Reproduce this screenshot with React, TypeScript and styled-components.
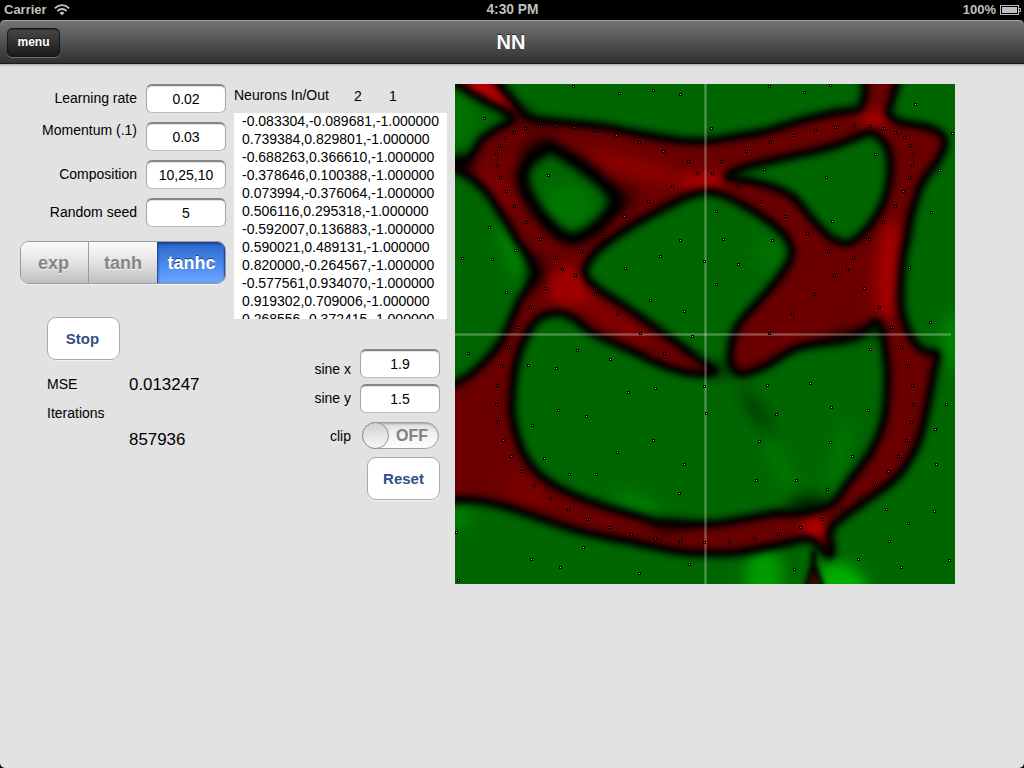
import React from 'react';
import styled, { createGlobalStyle, css } from 'styled-components';

const Global = createGlobalStyle`
  * { box-sizing: border-box; }
  body {
    margin: 0;
    background: #000;
    font-family: "Liberation Sans", Helvetica, Arial, sans-serif;
    font-size: 14px;
    color: #000;
    overflow: hidden;
  }
`;

const Screen = styled.div`
  width: 1024px;
  height: 768px;
  display: flex;
  flex-direction: column;
  overflow: hidden;
`;

const StatusBar = styled.header`
  height: 20px;
  display: grid;
  grid-template-columns: 1fr auto 1fr;
  align-items: center;
  padding: 0 3px 0 4px;
  background: #000;
  color: #bfbfbf;
  font-size: 13px;
  font-weight: bold;
  line-height: 20px;
`;

const Clock = styled.span`
  font-size: 13.8px;
`;

const StatusGroup = styled.div<{ $end?: boolean }>`
  display: flex;
  align-items: center;
  gap: ${(p) => (p.$end ? 4 : 7)}px;
  justify-content: ${(p) => (p.$end ? 'flex-end' : 'flex-start')};
`;

const NavBar = styled.nav`
  height: 44px;
  display: grid;
  grid-template-columns: 60px 1fr 69px;
  align-items: center;
  padding: 0 0 0 7px;
  border-radius: 5px 5px 0 0;
  background: linear-gradient(#757575, #535353 48%, #2f2f2f);
  box-shadow: inset 0 1px #a0a0a0, inset 0 -1px #1c1c1c;
`;

const MenuButton = styled.button`
  width: 53px;
  height: 29px;
  padding: 0;
  border: 1px solid #171717;
  border-radius: 5px;
  background: linear-gradient(#494949, #303030 50%, #1a1a1a);
  box-shadow: 0 1px rgba(255, 255, 255, 0.28), inset 0 1px 1px rgba(0, 0, 0, 0.4);
  color: #fff;
  font: bold 12px "Liberation Sans", Helvetica, sans-serif;
  text-shadow: 0 -1px rgba(0, 0, 0, 0.6);
`;

const Title = styled.h1`
  margin: 0;
  text-align: center;
  color: #fff;
  font-size: 20px;
  line-height: 44px;
  text-shadow: 0 -1px rgba(0, 0, 0, 0.6);
`;

const Content = styled.main`
  flex: 1;
  display: flex;
  align-items: flex-start;
  padding: 20px 0 0 20px;
  background: #e2e2e2;
  border-radius: 0 0 5px 5px;
  box-shadow: inset 0 4px 3px -3px rgba(0, 0, 0, 0.3);
`;

const Settings = styled.section`
  width: 206px;
  margin-right: 8px;
`;

const Field = styled.label<{ $gap: number }>`
  display: flex;
  justify-content: flex-end;
  align-items: flex-start;
  gap: 9px;
  margin-bottom: ${(p) => p.$gap}px;
`;

const FieldText = styled.span<{ $top: number }>`
  padding-top: ${(p) => p.$top}px;
  line-height: 16px;
`;

const Input = styled.input`
  width: 80px;
  height: 29px;
  padding: 0;
  border: 1px solid #a6a6a6;
  border-top: 2px solid #858585;
  border-bottom-color: #bdbdbd;
  border-radius: 6px;
  background: #fff;
  box-shadow: inset 0 1px 1px rgba(0, 0, 0, 0.12);
  text-align: center;
  font: 14px "Liberation Sans", Helvetica, sans-serif;
  color: #000;
  outline: none;
`;

const Segments = styled.div`
  display: grid;
  grid-template-columns: 67px 69px 1fr;
  height: 43px;
  margin-top: 14px;
  border: 1px solid #9c9c9c;
  border-radius: 9px;
  overflow: hidden;
  box-shadow: 0 1px rgba(255, 255, 255, 0.6);
`;

const Segment = styled.button<{ $active?: boolean }>`
  padding: 1px 0 0;
  border: 0;
  font: bold 18px "Liberation Sans", Helvetica, sans-serif;
  color: #858585;
  background: linear-gradient(#fbfbfb, #e3e3e3 50%, #bfbfbf);
  text-shadow: 0 1px rgba(255, 255, 255, 0.8);
  &:first-child { padding-right: 2px; }
  & + & { border-left: 1px solid #9c9c9c; }
  ${(p) =>
    p.$active &&
    css`
      color: #fff;
      background: linear-gradient(#2c67cb, #4586ea 50%, #6ba8ff);
      box-shadow: inset 0 2px 3px rgba(0, 20, 80, 0.5), inset -1px 0 1px rgba(0, 40, 130, 0.5);
      text-shadow: 0 -1px rgba(0, 0, 0, 0.5);
      && { border-left: 1px solid #2450a4; }
    `}
`;

const RoundButton = styled.button<{ $shift?: number }>`
  width: 73px;
  height: 43px;
  padding: 0 ${(p) => p.$shift ?? 0}px 0 0;
  border: 1px solid #a9a9a9;
  border-radius: 9px;
  background: #fff;
  box-shadow: 0 1px rgba(255, 255, 255, 0.6);
  color: #324f85;
  font: bold 15px "Liberation Sans", Helvetica, sans-serif;
`;

const Stats = styled.div`
  padding: 33px 0 0 27px;
`;

const StatGrid = styled.dl`
  display: grid;
  grid-template-columns: 82px 1fr;
  grid-template-rows: 29px 29px 24px;
  align-items: center;
  margin: 9px 0 0;
`;

const StatName = styled.dt``;

const StatValue = styled.dd<{ $low?: boolean }>`
  margin: 0;
  padding-top: 2px;
  font-size: 16.9px;
  ${(p) => p.$low && 'grid-column: 2; grid-row: 3;'}
`;

const Data = styled.section`
  width: 213px;
  margin-right: 8px;
`;

const DataHead = styled.div`
  display: grid;
  grid-template-columns: 120px 35px auto;
  height: 29px;
  padding-top: 3px;
  line-height: 16px;
`;

const HeadNumber = styled.span`
  padding-top: 1px;
`;

const DataList = styled.div`
  height: 206px;
  overflow: hidden;
  padding-left: 8px;
  background: #fff;
`;

const DataRows = styled.div`
  margin-top: -1px;
  line-height: 18px;
  white-space: nowrap;
`;

const Controls = styled.div`
  display: flex;
  flex-direction: column;
  align-items: flex-end;
  padding: 30px 7px 0 0;
`;

const SwitchRow = styled.div`
  display: flex;
  align-items: center;
  gap: 11px;
  margin: 3px 1px 8px 0;
`;

const Switch = styled.div`
  display: flex;
  align-items: center;
  width: 77px;
  height: 27px;
  border: 1px solid #a0a0a0;
  border-radius: 14px;
  background: linear-gradient(#dcdcdc, #f2f2f2 45%, #fdfdfd);
  box-shadow: inset 0 1px 2px rgba(0, 0, 0, 0.25);
`;

const Knob = styled.span`
  width: 27px;
  height: 27px;
  flex: none;
  margin-left: -1px;
  border: 1px solid #8f8f8f;
  border-radius: 50%;
  background: linear-gradient(#d0d0d0, #f8f8f8);
`;

const SwitchText = styled.span`
  padding-left: 7px;
  color: #808080;
  font-weight: bold;
  font-size: 16px;
`;

const Plot = styled.svg`
  display: block;
  flex: none;
  width: 500px;
  height: 500px;
`;

const samples = [
  '-0.083304,-0.089681,-1.000000',
  '0.739384,0.829801,-1.000000',
  '-0.688263,0.366610,-1.000000',
  '-0.378646,0.100388,-1.000000',
  '0.073994,-0.376064,-1.000000',
  '0.506116,0.295318,-1.000000',
  '-0.592007,0.136883,-1.000000',
  '0.590021,0.489131,-1.000000',
  '0.820000,-0.264567,-1.000000',
  '-0.577561,0.934070,-1.000000',
  '0.919302,0.709006,-1.000000',
  '0.268556,-0.372415,-1.000000',
];

type Pt = [number, number];

const pairs = (text: string): Pt[] =>
  text.trim().split(/\s+/).map((p) => p.split(',').map(Number) as Pt);

// Closed Catmull-Rom spline through the points.
const spline = (text: string) => {
  const p = pairs(text);
  const n = p.length;
  const f = (v: number) => v.toFixed(1);
  let d = `M${p[0][0]},${p[0][1]}`;
  for (let i = 0; i < n; i++) {
    const a = p[(i - 1 + n) % n];
    const b = p[i];
    const c = p[(i + 1) % n];
    const e = p[(i + 2) % n];
    d += `C${f(b[0] + (c[0] - a[0]) / 6)},${f(b[1] + (c[1] - a[1]) / 6)} ${f(c[0] - (e[0] - b[0]) / 6)},${f(c[1] - (e[1] - b[1]) / 6)} ${c[0]},${c[1]}`;
  }
  return `${d}Z`;
};

const regions = [
  // top
  '36,-30 38,-12 45,0 53,10 62,21 69,29 78,35 105,38 145,42 182,49 222,56 250,57 278,53 312,47 345,37 378,29 402,25 408,18 410,0 410,-12 410,-30',
  // upper left corner
  '-30,-30 -18,-14 3,1 28,16 52,29 57,36 45,43 28,54 20,66 12,76 0,77 -14,74 -30,72',
  // left side
  '-30,72 -14,77 0,84 15,93 32,109 48,133 62,156 74,174 80,188 75,200 65,216 55,239 45,259 28,279 12,293 0,299 -14,305 -30,312',
  // right ear
  '273,93 288,84 328,74 372,64 395,56 415,49 428,57 435,76 433,103 425,126 408,149 392,159 375,153 358,136 338,113 318,103 295,97',
  // centre and lower face
  '250,108 265,110 288,121 315,138 333,156 336,173 322,196 302,219 282,243 275,269 277,283 288,290 312,281 342,264 372,258 398,253 415,243 422,238 428,253 432,283 432,309 428,339 415,369 395,396 377,419 348,428 322,429 295,434 265,439 245,440 208,439 182,432 145,421 112,408 85,391 67,366 58,336 57,316 60,286 68,259 82,236 102,229 118,234 138,249 175,266 212,283 242,290 260,287 248,278 208,249 168,221 138,201 130,188 134,177 145,164 175,143 215,121 234,112',
  // right side and bottom
  '450,-30 445,-12 442,0 437,16 434,29 445,38 472,43 487,51 490,61 482,78 467,99 457,129 452,156 448,176 446,216 450,239 462,261 472,268 482,270 478,293 473,320 467,346 460,366 442,393 412,416 388,433 377,443 375,453 377,468 373,471 362,460 352,455 332,459 308,464 278,469 245,469 220,467 182,459 128,448 82,433 45,421 18,416 0,416 -14,416 -30,418 -30,530 250,530 530,530 530,-30',
].map(spline);

const eye = spline('92,64 105,68 128,83 148,99 162,116 155,129 138,146 118,155 102,148 82,126 68,99 73,78');

interface Glow { x: number; y: number; rx: number; ry: number; r?: number; c: string; o?: number }

const redGlows: Glow[] = [
  { x: 115, y: 203, rx: 24, ry: 20, c: '#ac0000' },
  { x: 182, y: 84, rx: 50, ry: 9, r: 16, c: '#980000' },
  { x: 248, y: 99, rx: 24, ry: 8, c: '#c80000' },
  { x: 420, y: 35, rx: 16, ry: 10, c: '#b40000' },
  { x: 434, y: 187, rx: 13, ry: 52, r: 4, c: '#b00000' },
  { x: 30, y: 8, rx: 34, ry: 12, r: 38, c: '#d80000' },
  { x: 359, y: 444, rx: 12, ry: 16, r: -30, c: '#c80000' },
  { x: 72, y: 406, rx: 24, ry: 14, r: 30, c: '#7c0000' },
  { x: 160, y: 236, rx: 40, ry: 10, r: 32, c: '#880000' },
  { x: 40, y: 104, rx: 30, ry: 8, r: 50, c: '#8a0000' },
];

const greenGlows: Glow[] = [
  { x: 62, y: 172, rx: 10, ry: 40, r: -24, c: '#008c00' },
  { x: 309, y: 492, rx: 18, ry: 30, c: '#00a400' },
  { x: 387, y: 500, rx: 26, ry: 20, r: 30, c: '#00b800' },
  { x: 384, y: 374, rx: 6, ry: 36, r: 14, c: '#008000' },
  { x: 326, y: 382, rx: 7, ry: 30, r: -28, c: '#007c00' },
  { x: 182, y: 421, rx: 26, ry: 9, r: 22, c: '#008200' },
  { x: 497, y: 258, rx: 9, ry: 28, c: '#008c00' },
  { x: 316, y: 168, rx: 14, ry: 20, c: '#007400' },
  { x: 3, y: 432, rx: 14, ry: 12, c: '#008000' },
  { x: 3, y: 34, rx: 16, ry: 30, c: '#007400' },
  { x: 112, y: 122, rx: 28, ry: 22, c: '#007800' },
];

const shadows: Glow[] = [
  { x: 301, y: 326, rx: 6, ry: 26, r: -34, c: '#002400', o: 0.7 },
  { x: 352, y: 420, rx: 20, ry: 8, r: -6, c: '#000', o: 0.7 },
  { x: 266, y: 286, rx: 13, ry: 6, c: '#000', o: 0.6 },
  { x: 216, y: 442, rx: 22, ry: 5, c: '#000', o: 0.75 },
  { x: 80, y: 188, rx: 10, ry: 18, c: '#000', o: 0.7 },
  { x: 400, y: 250, rx: 34, ry: 5, r: -10, c: '#000', o: 0.75 },
  { x: 68, y: 32, rx: 12, ry: 8, c: '#000', o: 0.4 },
  { x: 6, y: 80, rx: 14, ry: 7, c: '#000', o: 0.9 },
  { x: 166, y: 115, rx: 14, ry: 14, c: '#000', o: 0.5 },
  { x: 82, y: 62, rx: 20, ry: 10, r: -30, c: '#000', o: 0.5 },
];

// Left half of the symmetric training curve; the other half is its mirror image.
const curve = pairs(`59,48 70,44 84,42 100,41 119,43 139,46 161,51 184,58 208,67 233,77 242,89 217,102
  193,117 169,132 147,149 126,167 101,173 85,155 71,138 59,122 51,107 45,93 42,81 41,70 44,61 50,53
  107,185 120,191 90,204 140,210 75,223 162,230 63,243 185,249 53,263 46,282 42,301 41,320
  43,338 48,356 56,372 66,387 79,401 95,414 113,425 132,435 154,443 176,450 200,454 225,457`);

const redDots: Pt[] = [
  ...curve,
  ...curve.map(([x, y]): Pt => [499 - x, y]),
  [209, 269],
  [249, 458],
];

const greenDots = pairs(`118,2 164,9 198,6 225,10 29,34 93,91 34,143 60,166 7,174 37,175 225,156 205,172
  314,2 349,8 375,1 460,20 256,44 497,49 420,70 309,85 484,86 371,93 476,128 377,137 261,127 268,155 317,156
  170,184 249,177 51,208 195,216 229,227 237,252 13,269 122,266 155,275 73,281 101,284 173,308 200,304
  103,326 131,332 77,341 249,302 251,329 283,180 261,200 454,183 475,238 415,265 312,301 355,299 376,323
  413,326 321,330 491,320 480,345 89,374 114,390 141,390 162,368 198,356 229,380 224,409 1,448 128,463
  76,475 105,483 3,496 184,489 234,480 304,357 375,358 397,372 301,396 341,396 372,405 481,380 431,425
  479,427 453,439 434,457 403,475 446,483 494,476 339,485`);

const Glows = ({ items }: { items: Glow[] }) => (
  <g filter="url(#glow)">
    {items.map((g, i) => (
      <ellipse
        key={i}
        cx={g.x}
        cy={g.y}
        rx={g.rx}
        ry={g.ry}
        fill={g.c}
        opacity={g.o ?? 0.85}
        transform={`rotate(${g.r ?? 0} ${g.x} ${g.y})`}
      />
    ))}
  </g>
);

const Dots = ({ points, color }: { points: Pt[]; color: string }) => (
  <g>
    {points.map(([x, y]) => (
      <g key={`${x},${y}`}>
        <rect x={x - 1} y={y - 1} width="3" height="3" fill="#000" />
        <rect x={x} y={y} width="1" height="1" fill={color} />
      </g>
    ))}
  </g>
);

const DecisionPlot = () => (
  <Plot viewBox="0 0 500 500">
    <defs>
      <filter id="soft" filterUnits="userSpaceOnUse" x="-40" y="-40" width="580" height="580">
        <feGaussianBlur stdDeviation="2.4" />
      </filter>
      <filter id="haze" filterUnits="userSpaceOnUse" x="-40" y="-40" width="580" height="580">
        <feGaussianBlur stdDeviation="5" />
      </filter>
      <filter id="glow" filterUnits="userSpaceOnUse" x="-40" y="-40" width="580" height="580">
        <feGaussianBlur stdDeviation="7" />
      </filter>
      <clipPath id="green">
        {regions.map((d) => <path key={d} d={d} />)}
        <path d={eye} />
      </clipPath>
    </defs>
    <rect width="500" height="500" fill="#6c0000" />
    <Glows items={redGlows} />
    <g clipPath="url(#green)">
      <rect width="500" height="500" fill="#006700" />
      <Glows items={greenGlows} />
    </g>
    <Glows items={shadows} />
    <g fill="none" stroke="#000" filter="url(#haze)">
      {regions.map((d) => <path key={d} d={d} strokeWidth="8" opacity="0.8" />)}
      <path d={eye} strokeWidth="13" />
    </g>
    <g fill="none" stroke="#000" filter="url(#soft)">
      {regions.map((d) => <path key={d} d={d} strokeWidth="5" />)}
      <path d={eye} strokeWidth="5" />
      <path d="M359,466 L358,482 L350,510 M359,482 L369,510" strokeWidth="6" />
    </g>
    <path d="M359,484 L365,502 L353,502Z" fill="#3c0000" filter="url(#soft)" />
    <g fill="#fff">
      <rect x="249" width="3" height="500" opacity="0.2" />
      <rect x="250" width="1" height="500" opacity="0.12" />
      <rect y="249" width="496" height="3" opacity="0.2" />
      <rect y="250" width="496" height="1" opacity="0.12" />
    </g>
    <Dots points={greenDots} color="#7dff7d" />
    <Dots points={redDots} color="#ff4646" />
  </Plot>
);

const WifiIcon = () => (
  <svg width="16" height="12" viewBox="0 0 16 12" fill="none" stroke="#bfbfbf" strokeWidth="1.8">
    <path d="M0.8,4.3 Q8,-2 15.2,4.3" />
    <path d="M3.3,7 Q8,2.9 12.7,7" />
    <path d="M5.5,8.8 Q8,6.7 10.5,8.8 L8,11.5Z" fill="#bfbfbf" stroke="none" />
  </svg>
);

const BatteryIcon = () => (
  <svg width="21" height="10" viewBox="0 0 21 10">
    <rect x="0.5" y="0.5" width="18" height="9" fill="none" stroke="#bfbfbf" />
    <rect x="2" y="2" width="15" height="6" fill="#bfbfbf" />
    <path d="M19,3.5 H20.5 V6.5 H19" fill="none" stroke="#bfbfbf" />
  </svg>
);

interface FieldProps { label: string; value: string; top?: number; gap?: number }

const NumberField = ({ label, value, top = 6, gap = 9 }: FieldProps) => (
  <Field $gap={gap}>
    <FieldText $top={top}>{label}</FieldText>
    <Input defaultValue={value} />
  </Field>
);

export default function App() {
  return (
    <Screen>
      <Global />
      <StatusBar>
        <StatusGroup><span>Carrier</span><WifiIcon /></StatusGroup>
        <Clock>4:30 PM</Clock>
        <StatusGroup $end><span>100%</span><BatteryIcon /></StatusGroup>
      </StatusBar>
      <NavBar>
        <MenuButton>menu</MenuButton>
        <Title>NN</Title>
      </NavBar>
      <Content>
        <Settings>
          <NumberField label="Learning rate" value="0.02" />
          <NumberField label="Momentum (.1)" value="0.03" top={0} />
          <NumberField label="Composition" value="10,25,10" />
          <NumberField label="Random seed" value="5" gap={0} />
          <Segments>
            <Segment>exp</Segment>
            <Segment>tanh</Segment>
            <Segment $active>tanhc</Segment>
          </Segments>
          <Stats>
            <RoundButton $shift={2}>Stop</RoundButton>
            <StatGrid>
              <StatName>MSE</StatName>
              <StatValue>0.013247</StatValue>
              <StatName>Iterations</StatName>
              <StatValue $low>857936</StatValue>
            </StatGrid>
          </Stats>
        </Settings>
        <Data>
          <DataHead>
            <span>Neurons In/Out</span>
            <HeadNumber>2</HeadNumber>
            <HeadNumber>1</HeadNumber>
          </DataHead>
          <DataList>
            <DataRows>
              {samples.map((s) => <div key={s}>{s}</div>)}
            </DataRows>
          </DataList>
          <Controls>
            <NumberField label="sine x" value="1.9" top={12} gap={6} />
            <NumberField label="sine y" value="1.5" top={6} gap={6} />
            <SwitchRow>
              <span>clip</span>
              <Switch><Knob /><SwitchText>OFF</SwitchText></Switch>
            </SwitchRow>
            <RoundButton>Reset</RoundButton>
          </Controls>
        </Data>
        <DecisionPlot />
      </Content>
    </Screen>
  );
}
